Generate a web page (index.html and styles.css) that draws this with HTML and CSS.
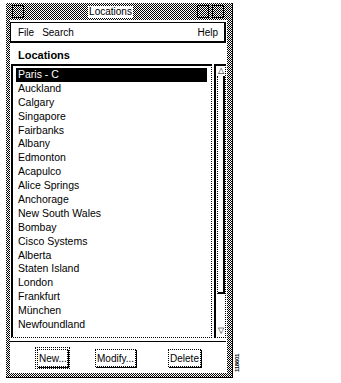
FILE: index.html
```html
<!DOCTYPE html>
<html>
<head>
    <meta charset="UTF-8">
    <title>Locations</title>
    <link rel="stylesheet" href="styles.css">
</head>
<body>
    <div class="screen">
        <div class="window">
            <div class="titlebar">
                <span class="tb-btn menu-btn"></span>
                <span class="title">Locations</span>
                <span class="tb-btn min-btn"></span>
                <span class="tb-btn max-btn"></span>
            </div>
            <div class="client">
                <div class="menubar">
                    <span>File</span>
                    <span>Search</span>
                    <span class="help">Help</span>
                </div>
                <div class="label">Locations</div>
                <div class="listarea">
                    <ul class="list">
                        <li class="selected">Paris - C</li>
                        <li>Auckland</li>
                        <li>Calgary</li>
                        <li>Singapore</li>
                        <li>Fairbanks</li>
                        <li>Albany</li>
                        <li>Edmonton</li>
                        <li>Acapulco</li>
                        <li>Alice Springs</li>
                        <li>Anchorage</li>
                        <li>New South Wales</li>
                        <li>Bombay</li>
                        <li>Cisco Systems</li>
                        <li>Alberta</li>
                        <li>Staten Island</li>
                        <li>London</li>
                        <li>Frankfurt</li>
                        <li>München</li>
                        <li>Newfoundland</li>
                    </ul>
                    <div class="scrollbar">
                        <span class="arrow">&#9651;</span>
                        <div class="trough"><div class="thumb"></div></div>
                        <span class="arrow">&#9661;</span>
                    </div>
                </div>
                <div class="buttons">
                    <button class="btn default">New...</button>
                    <button class="btn">Modify...</button>
                    <button class="btn">Delete</button>
                </div>
            </div>
        </div>
        <div class="fig">118601</div>
    </div>
</body>
</html>
```

FILE: styles.css
```css
body {
    margin: 0;
    background: #fff;
    font-family: "Liberation Sans", Arial, sans-serif;
    color: #000;
}

.screen {
    display: flex;
    align-items: flex-end;
    padding: 3px 0 0 6px;
}

/* 50% grey dither like the old X display */
.window {
    width: 217px;
    height: 370px;
    padding: 0 5px 4px 4px;
    background: repeating-conic-gradient(#000 0 25%, #fff 0 50%) 0 0 / 2px 2px;
    border-right: 1px solid #000;
    border-bottom: 1px solid #000;
    display: flex;
    flex-direction: column;
}

.titlebar {
    height: 17px;
    display: flex;
    align-items: center;
    gap: 3px;
}

.tb-btn {
    width: 10px;
    height: 11px;
    border: 1px solid #000;
    background: repeating-conic-gradient(#000 0 25%, #fff 0 50%) 0 0 / 2px 2px;
}

.menu-btn {
    margin-left: 2px;
}

.title {
    margin: 0 auto;
    background: #fff;
    font-size: 10px;
    line-height: 12px;
    padding: 0 1px;
}

.max-btn {
    margin-right: 3px;
}

.client {
    flex: 1;
    background: #fff;
    padding: 2px 1px 0 0;
    display: flex;
    flex-direction: column;
}

.menubar {
    height: 18px;
    border: 1px solid #000;
    border-right-width: 2px;
    border-bottom-width: 2px;
    display: flex;
    align-items: center;
    font-size: 10px;
    padding: 0 6px 0 7px;
    gap: 8px;
}

.menubar .help {
    margin-left: auto;
}

.label {
    font-size: 11px;
    font-weight: bold;
    padding: 6px 0 0 8px;
    height: 18px;
    box-sizing: border-box;
}

.listarea {
    display: flex;
    gap: 2px;
    margin: 3px 0 0 1px;
    height: 274px;
}

.list {
    list-style: none;
    margin: 0;
    padding: 2px 4px 0 3px;
    width: 191px;
    border-left: 2px solid #000;
    border-top: 2px solid #000;
    border-right: 1px dotted #000;
    border-bottom: 1px dotted #000;
    font-size: 10.5px;
    overflow: hidden;
}

.list li {
    height: 13.9px;
    line-height: 13.9px;
    padding-left: 2px;
    white-space: nowrap;
}

.list li.selected {
    background: #000;
    color: #fff;
}

.scrollbar {
    width: 8px;
    border-left: 2px solid #000;
    border-top: 2px solid #000;
    border-right: 1px dotted #000;
    border-bottom: 1px dotted #000;
    display: flex;
    flex-direction: column;
    align-items: center;
    padding: 0 0 2px 1px;
}

.arrow {
    font-size: 8px;
    line-height: 8px;
    height: 8px;
    margin-top: 1px;
}

.trough {
    flex: 1;
    width: 100%;
    padding-top: 1px;
}

.thumb {
    height: 218px;
    border-right: 2px solid #000;
    border-bottom: 2px solid #000;
    border-left: 1px dotted #000;
    box-sizing: border-box;
}

.buttons {
    border-top: 1px solid #000;
    margin-top: 3px;
    display: flex;
    padding: 7px 0 0 27px;
    gap: 27px;
}

.btn {
    font-family: "Liberation Sans", Arial, sans-serif;
    font-size: 10px;
    height: 18px;
    padding: 0 1px;
    background: #fff;
    color: #000;
    border: 1px dotted #000;
    box-shadow: 1px 1px 0 #000;
}

.btn.default {
    outline: 1px dotted #000;
    outline-offset: 1px;
    width: 31px;
}

.btn + .btn + .btn {
    margin-left: 5px;
}

.fig {
    writing-mode: vertical-rl;
    transform: rotate(180deg);
    font-size: 6px;
    font-weight: bold;
    margin: 0 0 6px 1px;
    letter-spacing: -0.3px;
}
```
